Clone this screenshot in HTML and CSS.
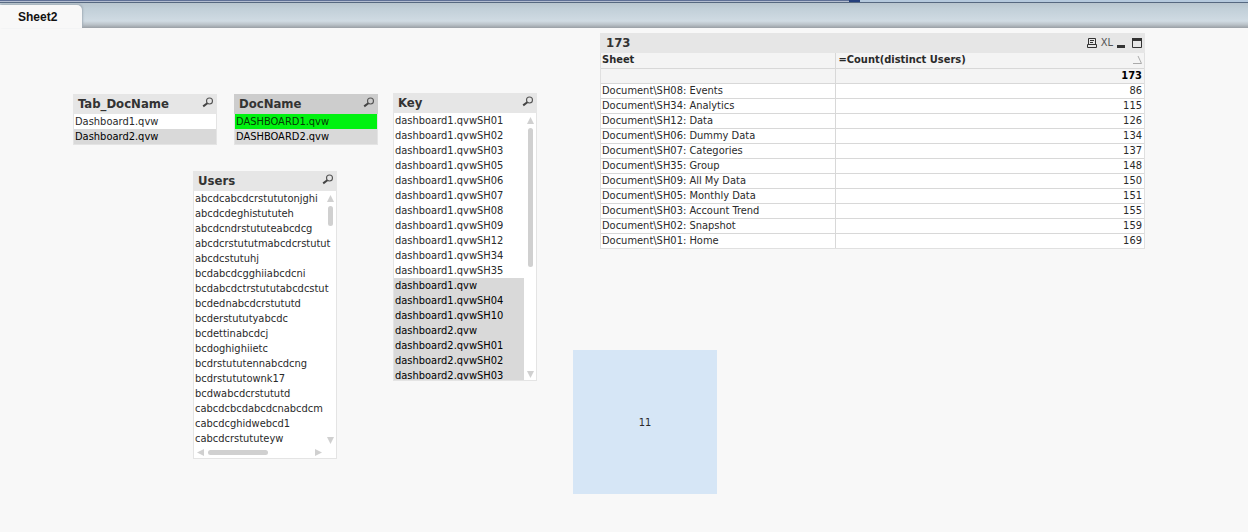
FILE: index.html
```html
<!DOCTYPE html>
<html lang="en">
<head>
<meta charset="utf-8">
<title>Sheet2</title>
<link rel="stylesheet" href="styles.css">
</head>
<body>
<svg class="defs" aria-hidden="true">
  <symbol id="search" viewBox="0 0 12 12"><circle cx="7.5" cy="4" r="3" fill="none" stroke="#555" stroke-width="1.1"/><path d="M5.3 6.2 1.2 9.4" stroke="#444" stroke-width="2" fill="none"/></symbol>
  <symbol id="up" viewBox="0 0 7 7"><path d="M3.5 0 7 7H0z"/></symbol>
  <symbol id="down" viewBox="0 0 7 7"><path d="M0 0H7L3.5 7z"/></symbol>
  <symbol id="left" viewBox="0 0 7 7"><path d="M7 0V7L0 3.5z"/></symbol>
  <symbol id="right" viewBox="0 0 7 7"><path d="M0 0 7 3.5 0 7z"/></symbol>
</svg>
<header class="topbar">
  <div class="progress"><div class="progress-fill"></div><div class="progress-tip"></div></div>
  <nav class="tabs"><a class="tab" href="#sheet">Sheet2</a></nav>
</header>
<main class="sheet" id="sheet">
  <div class="left">
    <div class="pair">
      <section class="box">
        <div class="caption"><h2>Tab_DocName</h2><button class="icon" aria-label="Search Tab_DocName"><svg width="12" height="12"><use href="#search"/></svg></button></div>
        <ul class="list">
          <li><button class="item">Dashboard1.qvw</button></li>
          <li><button class="item excluded">Dashboard2.qvw</button></li>
        </ul>
      </section>
      <section class="box active">
        <div class="caption"><h2>DocName</h2><button class="icon" aria-label="Search DocName"><svg width="12" height="12"><use href="#search"/></svg></button></div>
        <ul class="list">
          <li><button class="item selected">DASHBOARD1.qvw</button></li>
          <li><button class="item excluded">DASHBOARD2.qvw</button></li>
        </ul>
      </section>
    </div>
    <section class="box users">
      <div class="caption"><h2>Users</h2><button class="icon" aria-label="Search Users"><svg width="12" height="12"><use href="#search"/></svg></button></div>
      <div class="body">
        <ul class="list">
          <li><button class="item">abcdcabcdcrstututonjghi</button></li>
          <li><button class="item">abcdcdeghistututeh</button></li>
          <li><button class="item">abcdcndrstututeabcdcg</button></li>
          <li><button class="item">abcdcrstututmabcdcrstutut</button></li>
          <li><button class="item">abcdcstutuhj</button></li>
          <li><button class="item">bcdabcdcgghiiabcdcni</button></li>
          <li><button class="item">bcdabcdctrstututabcdcstut</button></li>
          <li><button class="item">bcdednabcdcrstututd</button></li>
          <li><button class="item">bcderstututyabcdc</button></li>
          <li><button class="item">bcdettinabcdcj</button></li>
          <li><button class="item">bcdoghighiietc</button></li>
          <li><button class="item">bcdrstututennabcdcng</button></li>
          <li><button class="item">bcdrstututownk17</button></li>
          <li><button class="item">bcdwabcdcrstututd</button></li>
          <li><button class="item">cabcdcbcdabcdcnabcdcm</button></li>
          <li><button class="item">cabcdcghidwebcd1</button></li>
          <li><button class="item">cabcdcrstututeyw</button></li>
        </ul>
        <div class="vbar" aria-hidden="true"><svg width="7" height="7"><use href="#up"/></svg><div class="thumb"></div><svg class="end" width="7" height="7"><use href="#down"/></svg></div>
      </div>
      <div class="hbar" aria-hidden="true"><svg width="7" height="7"><use href="#left"/></svg><div class="thumb"></div><svg class="end" width="7" height="7"><use href="#right"/></svg></div>
    </section>
  </div>
  <section class="box key">
    <div class="caption"><h2>Key</h2><button class="icon" aria-label="Search Key"><svg width="12" height="12"><use href="#search"/></svg></button></div>
    <div class="body">
      <ul class="list">
        <li><button class="item">dashboard1.qvwSH01</button></li>
        <li><button class="item">dashboard1.qvwSH02</button></li>
        <li><button class="item">dashboard1.qvwSH03</button></li>
        <li><button class="item">dashboard1.qvwSH05</button></li>
        <li><button class="item">dashboard1.qvwSH06</button></li>
        <li><button class="item">dashboard1.qvwSH07</button></li>
        <li><button class="item">dashboard1.qvwSH08</button></li>
        <li><button class="item">dashboard1.qvwSH09</button></li>
        <li><button class="item">dashboard1.qvwSH12</button></li>
        <li><button class="item">dashboard1.qvwSH34</button></li>
        <li><button class="item">dashboard1.qvwSH35</button></li>
        <li><button class="item excluded">dashboard1.qvw</button></li>
        <li><button class="item excluded">dashboard1.qvwSH04</button></li>
        <li><button class="item excluded">dashboard1.qvwSH10</button></li>
        <li><button class="item excluded">dashboard2.qvw</button></li>
        <li><button class="item excluded">dashboard2.qvwSH01</button></li>
        <li><button class="item excluded">dashboard2.qvwSH02</button></li>
        <li><button class="item excluded">dashboard2.qvwSH03</button></li>
      </ul>
      <div class="vbar" aria-hidden="true"><svg width="7" height="7"><use href="#up"/></svg><div class="thumb"></div><svg class="end" width="7" height="7"><use href="#down"/></svg></div>
    </div>
  </section>
  <div class="right">
    <section class="chart">
      <div class="caption">
        <h2>173</h2>
        <div class="tools">
          <button class="icon" aria-label="Print"><svg width="10" height="10" viewBox="0 0 10 10" fill="none" stroke="#333"><path d="M1.5 6.5V.5H8.5V6.5M.5 6.5H9.5V9.5H.5zM3 2.5H7M3 4.5H6"/></svg></button>
          <button class="icon xl" aria-label="Send to Excel">XL</button>
          <button class="icon" aria-label="Minimize"><svg width="8" height="10" viewBox="0 0 8 10"><path d="M0 7H8V10H0z" fill="#333"/></svg></button>
          <button class="icon max" aria-label="Maximize"><svg width="10" height="10" viewBox="0 0 10 10"><path d="M.5 1V9.5H9.5V1" fill="none" stroke="#333"/><path d="M0 0H10V3H0z" fill="#333"/></svg></button>
        </div>
      </div>
      <table>
        <thead>
          <tr><th scope="col">Sheet</th><th scope="col"><div class="sort"><span>=Count(distinct Users)</span><svg width="9" height="8" viewBox="0 0 9 8" fill="none"><path d="M0 7.5H8.5" stroke="#aaa"/><path d="M8.5 7.5 5 0" stroke="#aaa"/></svg></div></th></tr>
          <tr class="total"><td></td><td>173</td></tr>
        </thead>
        <tbody>
          <tr><td>Document\SH08: Events</td><td>86</td></tr>
          <tr><td>Document\SH34: Analytics</td><td>115</td></tr>
          <tr><td>Document\SH12: Data</td><td>126</td></tr>
          <tr><td>Document\SH06: Dummy Data</td><td>134</td></tr>
          <tr><td>Document\SH07: Categories</td><td>137</td></tr>
          <tr><td>Document\SH35: Group</td><td>148</td></tr>
          <tr><td>Document\SH09: All My Data</td><td>150</td></tr>
          <tr><td>Document\SH05: Monthly Data</td><td>151</td></tr>
          <tr><td>Document\SH03: Account Trend</td><td>155</td></tr>
          <tr><td>Document\SH02: Snapshot</td><td>159</td></tr>
          <tr><td>Document\SH01: Home</td><td>169</td></tr>
        </tbody>
      </table>
    </section>
    <div class="tile">11</div>
  </div>
</main>
</body>
</html>
```
FILE: styles.css
```css
* { box-sizing: border-box; }
body { margin: 0; background: #f8f8f8; color: #2a2a2a; font: 11px/15px "DejaVu Sans Condensed", "DejaVu Sans", sans-serif; font-stretch: condensed; }
.defs { display: none; }
button { margin: 0; padding: 0; border: 0; background: none; color: inherit; font: inherit; }
h2 { margin: 0; font-size: 13px; line-height: 20px; }
svg { display: block; flex: none; }
.topbar { height: 28px; background: linear-gradient(#b4c0c9 0, #c1cfd8 30%, #d0dbe3 75%, #bac2c8 88%, #999fa5 100%); }
.progress { display: flex; height: 3px; background: #b5c9dd; border-bottom: 1px solid #566880; }
.progress-fill { width: 68%; background: #5f7096; border-bottom: 1px solid #b3bdd0; }
.progress-tip { width: 11px; background: #243f7c; }
.tabs { display: flex; padding-top: 2px; }
.tab { width: 82px; height: 23px; padding-left: 18px; border-radius: 0 5px 0 0; background: #f8f8f8; box-shadow: 1px -1px 2px #a3afb9; color: #111; font: bold 12px/24px "Liberation Sans", Arial, sans-serif; text-decoration: none; }
.sheet { display: flex; align-items: flex-start; padding: 5px 103px 38px 73px; }
.left { flex: none; margin: 61px 15px 0 0; }
.pair { display: flex; gap: 17px; }
.box { width: 144px; border: 1px solid #e4e4e4; border-top: 0; background: #fff; }
.caption { display: flex; justify-content: space-between; height: 20px; padding: 0 3px 0 5px; margin: 0 -1px; background: #e6e6e6; color: #333; }
.box .icon { height: 17px; }
.active .caption { background: #cdcdcd; }
.icon { display: flex; align-items: center; }
.list { flex: 1; min-width: 0; margin: 0; padding: 0; list-style: none; }
.item { display: block; width: 100%; height: 15px; padding-left: 1px; text-align: left; white-space: nowrap; }
.excluded { background: #d9d9d9; color: #000; }
.selected { background: #00f210; color: #043d04; }
.users { margin: 26px 0 0 120px; }
.key { flex: none; margin: 60px 36px 0 0; }
.body { display: flex; overflow: hidden; }
.users .body { height: 255px; }
.key .body { height: 267px; }
.vbar { display: flex; flex-direction: column; align-items: center; gap: 4px; width: 12px; padding: 4px 0 2px; fill: #d0d0d0; }
.thumb { border-radius: 3px; background: #d0d0d0; }
.vbar .thumb { width: 5px; height: 20px; }
.key .thumb { height: 139px; }
.vbar .end { margin-top: auto; }
.hbar { display: flex; align-items: center; gap: 4px; height: 12px; padding: 0 14px 0 3px; fill: #d0d0d0; }
.hbar .thumb { width: 60px; height: 5px; }
.hbar .end { margin-left: auto; }
.right { flex: 1; min-width: 0; }
.chart { margin-left: 27px; border: 1px solid #e0e0e0; border-top: 0; background: #fff; }
.chart .caption { padding: 0 3px 0 6px; }
.tools { display: flex; gap: 4px; }
.xl { font: 11px/18px "DejaVu Sans Condensed", sans-serif; font-stretch: condensed; color: #555; }
.max { margin-left: 3px; }
table { width: 100%; border-collapse: collapse; table-layout: fixed; }
th, td { height: 15px; padding: 0 2px 0 1px; border-top: 1px solid #d8d8d8; line-height: 14px; text-align: left; font-size: 11px; }
thead { background: #f4f4f4; }
th { border-top: 0; }
th:first-child { width: 234px; }
th + th, td + td { padding-left: 3px; border-left: 1px solid #d8d8d8; }
td + td { text-align: right; }
.total td { font-weight: bold; color: #000; }
.sort { display: flex; align-items: center; justify-content: space-between; }
.tile { display: flex; align-items: center; justify-content: center; width: 144px; height: 144px; margin-top: 101px; background: #d6e6f6; }
```
